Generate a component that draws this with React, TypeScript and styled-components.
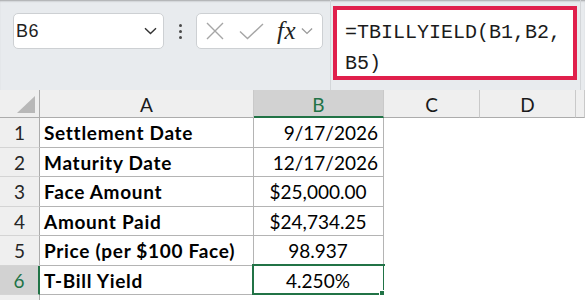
import React from "react";
import styled, { createGlobalStyle } from "styled-components";

const GREEN = "#217346";

const Global = createGlobalStyle`
  html, body { margin: 0; padding: 0; background: #ffffff; }
  body { width: 585px; height: 300px; overflow: hidden; font-family: "Lato", "Liberation Sans", sans-serif; }
  * { box-sizing: border-box; }
`;

const Page = styled.div`
  width: 585px;
  height: 300px;
  display: flex;
  flex-direction: column;
  overflow: hidden;
`;

const TopBar = styled.div`
  height: 90px;
  flex: none;
  display: flex;
  align-items: flex-start;
  background: #e8ebee;
  box-shadow: inset 0 2px 2px -1px rgba(0, 0, 0, 0.3);
`;

const NameBox = styled.div`
  margin: 13px 0 0 13px;
  width: 151px;
  height: 36px;
  background: #fff;
  border: 1px solid #cdd0d3;
  border-radius: 5px;
  display: flex;
  align-items: center;
  justify-content: space-between;
  padding: 0 6px 0 2px;
  font-family: "Liberation Sans", Arial, sans-serif;
  font-size: 18px;
  letter-spacing: 0.6px;
  color: #1f1f1f;
`;

const Dots = styled.div`
  width: 32px;
  height: 36px;
  margin-top: 13px;
  display: flex;
  flex-direction: column;
  align-items: center;
  justify-content: center;
  gap: 3px;
  span {
    width: 3px;
    height: 3px;
    border-radius: 50%;
    background: #4a4a4a;
  }
`;

const FxBox = styled.div`
  margin-top: 13px;
  width: 127px;
  height: 36px;
  background: #fff;
  border: 1px solid #cdd0d3;
  border-radius: 5px;
  display: flex;
  align-items: center;
  padding-left: 9px;
`;

const Fx = styled.span`
  font-family: "Liberation Serif", "Times New Roman", serif;
  font-style: italic;
  font-size: 25px;
  color: #222;
  margin: 0 5px 2px 13px;
  letter-spacing: 0.5px;
  line-height: 1;
`;

const FormulaPanel = styled.div`
  margin-left: 7px;
  width: 251px;
  height: 90px;
  border-left: 1px solid #d3d6d9;
  border-right: 1px solid #d3d6d9;
  padding: 6px 0 0 2px;
`;

const FormulaBox = styled.div`
  width: 244px;
  height: 74px;
  border: 4px solid #e0204c;
  background: #fff;
  padding: 7px 0 0 8px;
  font-family: "Liberation Mono", "Courier New", monospace;
  font-size: 20px;
  line-height: 31px;
  color: #1b1b1b;
  white-space: pre;
`;

const Sheet = styled.div`
  display: grid;
  grid-template-columns: 40px 214px 130px 96px 96px 9px;
  grid-template-rows: 28px 30px 29px 30px 29px 30px 29px 20px;
  font-size: 19px;
`;

const ColHead = styled.div<{ $sel?: boolean }>`
  background: ${(p) => (p.$sel ? "#d2d2d2" : "#efefef")};
  color: ${(p) => (p.$sel ? GREEN : "#1a1a1a")};
  border-right: 1px solid #c9c9c9;
  border-bottom: ${(p) => (p.$sel ? `2px solid ${GREEN}` : "1px solid #acacac")};
  display: flex;
  align-items: center;
  justify-content: center;
  padding-top: 2px;
`;

const Corner = styled.div`
  background: #efefef;
  border-right: 1px solid #acacac;
  border-bottom: 1px solid #acacac;
  display: flex;
  align-items: flex-end;
  justify-content: flex-end;
  padding: 0 4px 4px 0;
`;

const RowHead = styled.div<{ $sel?: boolean }>`
  background: ${(p) => (p.$sel ? "#d2d2d2" : "#efefef")};
  color: ${(p) => (p.$sel ? GREEN : "#262626")};
  border-right: ${(p) => (p.$sel ? `2px solid ${GREEN}` : "1px solid #acacac")};
  border-bottom: 1px solid #d4d4d4;
  display: flex;
  align-items: center;
  justify-content: center;
`;

const Cell = styled.div<{ $align?: "left" | "right" | "center"; $bold?: boolean; $table?: boolean }>`
  position: relative;
  background: #fff;
  color: #000;
  font-weight: ${(p) => (p.$bold ? 700 : 400)};
  letter-spacing: ${(p) => (p.$bold ? "0.7px" : "0")};
  border-right: ${(p) => (p.$table ? "1px solid #b4b4b4" : "none")};
  border-bottom: ${(p) => (p.$table ? "1px solid #b4b4b4" : "none")};
  display: flex;
  align-items: center;
  justify-content: ${(p) => (p.$align === "right" ? "flex-end" : p.$align === "center" ? "center" : "flex-start")};
  padding: 0 5px 0 4px;
  white-space: nowrap;
`;

const Selection = styled.div`
  position: absolute;
  left: -2px;
  top: -2px;
  right: -2px;
  bottom: -1px;
  border: 2px solid ${GREEN};
  pointer-events: none;
`;

const Handle = styled.div`
  position: absolute;
  right: -4px;
  bottom: -5px;
  width: 8px;
  height: 8px;
  background: ${GREEN};
  border: 1px solid #fff;
`;

const Chevron = ({ color, w = 13 }: { color: string; w?: number }) => (
  <svg width={w} height="8" viewBox="0 0 13 8">
    <path d="M1 1.2 L6.5 6.6 L12 1.2" fill="none" stroke={color} strokeWidth="1.4" />
  </svg>
);

const rows: { label: string; value: string; align: "right" | "center" }[] = [
  { label: "Settlement Date", value: "9/17/2026", align: "right" },
  { label: "Maturity Date", value: "12/17/2026", align: "right" },
  { label: "Face Amount", value: "$25,000.00", align: "center" },
  { label: "Amount Paid", value: "$24,734.25", align: "center" },
  { label: "Price (per $100 Face)", value: "98.937", align: "center" },
  { label: "T-Bill Yield", value: "4.250%", align: "center" },
];

export default function App() {
  return (
    <Page>
      <Global />
      <TopBar>
        <NameBox>
          <span>B6</span>
          <Chevron color="#333" />
        </NameBox>
        <Dots>
          <span />
          <span />
          <span />
        </Dots>
        <FxBox>
          <svg width="18" height="18" viewBox="0 0 18 18">
            <path d="M1 1 L17 17 M17 1 L1 17" stroke="#a6a6a6" strokeWidth="1.4" fill="none" />
          </svg>
          <svg width="25" height="17" viewBox="0 0 25 17" style={{ marginLeft: 15 }}>
            <path d="M1 8.5 L8.5 15.5 L24 1" stroke="#a6a6a6" strokeWidth="1.4" fill="none" />
          </svg>
          <Fx>fx</Fx>
          <Chevron color="#9a9a9a" w={12} />
        </FxBox>
        <FormulaPanel>
          <FormulaBox>{"=TBILLYIELD(B1,B2,\nB5)"}</FormulaBox>
        </FormulaPanel>
      </TopBar>
      <Sheet>
        <Corner>
          <svg width="18" height="17" viewBox="0 0 18 17">
            <path d="M18 0 L18 17 L0 17 Z" fill="#b8b8b8" />
          </svg>
        </Corner>
        <ColHead>A</ColHead>
        <ColHead $sel>B</ColHead>
        <ColHead>C</ColHead>
        <ColHead>D</ColHead>
        <ColHead />
        {rows.map((r, i) => {
          const sel = i === 5;
          return (
            <React.Fragment key={r.label}>
              <RowHead $sel={sel}>{i + 1}</RowHead>
              <Cell $bold $table>{r.label}</Cell>
              <Cell $table $align={r.align}>
                {r.value}
                {sel && (
                  <Selection>
                    <Handle />
                  </Selection>
                )}
              </Cell>
              <Cell />
              <Cell />
              <Cell />
            </React.Fragment>
          );
        })}
        <RowHead />
        <Cell />
        <Cell />
        <Cell />
        <Cell />
        <Cell />
      </Sheet>
    </Page>
  );
}
